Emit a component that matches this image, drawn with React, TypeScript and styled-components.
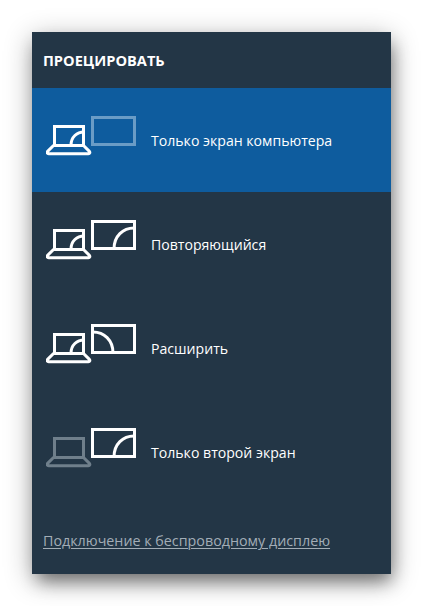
import React from "react";
import { createGlobalStyle, styled } from "styled-components";

const GlobalStyle = createGlobalStyle`
  html, body {
    margin: 0;
    padding: 0;
    background: #fff;
  }
  body {
    font-family: "Open Sans", "Noto Sans", sans-serif;
  }
`;

const Page = styled.div`
  width: 423px;
  height: 606px;
  padding: 32px 0 0 32px;
  box-sizing: border-box;
  overflow: hidden;
`;

const Panel = styled.div`
  width: 359px;
  height: 542px;
  display: flex;
  flex-direction: column;
  background: #233646;
  box-shadow: 0 6px 26px rgba(0, 0, 0, 0.32), 3px 10px 16px -3px rgba(0, 0, 0, 0.42);
`;

const Title = styled.div`
  height: 56px;
  padding-left: 11px;
  display: flex;
  align-items: center;
  color: #fff;
  font-size: 14.6px;
  font-weight: 700;
`;

const Row = styled.div<{ $active?: boolean }>`
  height: 104px;
  padding-left: 14px;
  display: flex;
  align-items: center;
  gap: 15px;
  background: ${({ $active }) => ($active ? "#0e5c9e" : "transparent")};
  color: #fff;
  font-size: 14.1px;
`;

const IconBox = styled.svg`
  width: 90px;
  height: 40px;
  flex: none;
  margin-bottom: 8px;
`;

const Footer = styled.div`
  flex: 1;
  padding: 25px 0 0 11px;
`;

const Link = styled.span`
  color: #a2adb6;
  font-size: 14.3px;
  text-decoration: underline;
  text-underline-offset: 2px;
  text-decoration-thickness: 1px;
`;

const Arc = ({ d }: { d: string }) => <path d={d} fill="none" stroke="#fff" strokeWidth="3" />;

const Laptop = ({ color }: { color: string }) => (
  <g fill="none" stroke={color} strokeWidth="3" strokeLinejoin="round">
    <path d="M8.5 29V10.5H37.5V29" strokeLinejoin="miter" />
    <path d="M7.5 29.5H37.5L43.4 35.4C44.2 36.4 43.8 37.8 42.4 37.8H2.6C1.2 37.8 .8 36.4 1.6 35.4Z" />
  </g>
);

const Display = ({ color }: { color: string }) => (
  <rect x="46.5" y="1.5" width="42" height="27" fill="none" stroke={color} strokeWidth="3" />
);

type Mode = { label: string; active?: boolean; laptopOff?: boolean; screen: "off" | "same" | "extend" };

const modes: Mode[] = [
  { label: "Только экран компьютера", active: true, screen: "off" },
  { label: "Повторяющийся", screen: "same" },
  { label: "Расширить", screen: "extend" },
  { label: "Только второй экран", laptopOff: true, screen: "same" },
];

const ModeIcon = ({ mode }: { mode: Mode }) => (
  <IconBox viewBox="0 0 90 40">
    <Laptop color={mode.laptopOff ? "#6f7f8b" : "#fff"} />
    {!mode.laptopOff && <Arc d="M25 29C25 21 31 16 38 16" />}
    <Display color={mode.screen === "off" ? "#6a9cc6" : "#fff"} />
    {mode.screen === "same" && <Arc d="M68 29C68 16 77 8 88 8" />}
    {mode.screen === "extend" && <Arc d="M47 8C58 8 67 16 67 29" />}
  </IconBox>
);

export default function App() {
  return (
    <Page>
      <GlobalStyle />
      <Panel>
        <Title>ПРОЕЦИРОВАТЬ</Title>
        {modes.map((mode) => (
          <Row key={mode.label} $active={mode.active}>
            <ModeIcon mode={mode} />
            <span>{mode.label}</span>
          </Row>
        ))}
        <Footer>
          <Link>Подключение к беспроводному дисплею</Link>
        </Footer>
      </Panel>
    </Page>
  );
}
